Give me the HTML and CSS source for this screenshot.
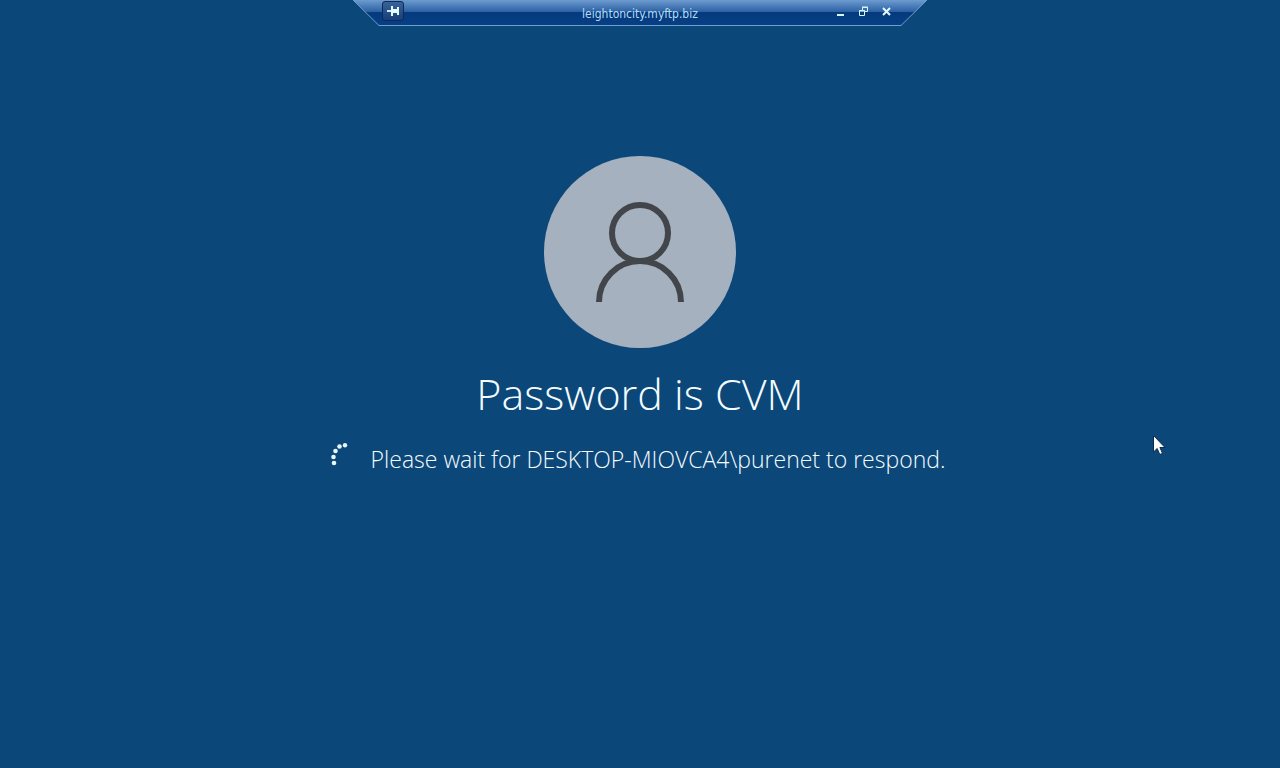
FILE: index.html
```html
<!DOCTYPE html>
<html lang="en">
<head>
    <meta charset="UTF-8">
    <meta name="viewport" content="width=device-width, initial-scale=1.0">
    <title>leightoncity.myftp.biz</title>
    <link rel="stylesheet" href="styles.css">
</head>
<body>
    <header class="connection-bar">
        <svg class="bar-shape" viewBox="0 0 576 27" aria-hidden="true">
            <defs>
                <linearGradient id="barFill" x1="0" y1="0" x2="0" y2="1">
                    <stop offset="0" stop-color="#6d9bcf"/>
                    <stop offset="0.46" stop-color="#2c61a4"/>
                    <stop offset="0.47" stop-color="#053a7c"/>
                    <stop offset="1" stop-color="#083f86"/>
                </linearGradient>
            </defs>
            <path d="M1 0 L27 25.500 H549 L575 0 Z" fill="url(#barFill)"/>
            <path d="M1 0 L27 25.500 H549 L575 0" fill="none" stroke="#6f9fcb"/>
        </svg>
        <button class="pin-button" type="button" aria-label="Pin the connection bar">
            <svg width="14" height="10" viewBox="0 0 14 10" aria-hidden="true">
                <path d="M1 5h5" fill="none" stroke="#c5ecfa" stroke-width="2"/>
                <path d="M5 0h2v10H5zM7 3h4v4H7zM11 1h2v8h-2z" fill="#e2fbff"/>
            </svg>
        </button>
        <span class="host-name">leightoncity.myftp.biz</span>
        <div class="window-buttons">
            <button type="button" aria-label="Minimize">
                <svg width="11" height="11" viewBox="0 0 11 11" aria-hidden="true">
                    <path d="M2 8h7v2H2z" fill="#d5f6ff"/>
                </svg>
            </button>
            <button type="button" aria-label="Restore">
                <svg width="11" height="11" viewBox="0 0 11 11" aria-hidden="true">
                    <path d="M4.500 4V1.500h5v4H7M4 1h6" fill="none" stroke="#d5f6ff"/>
                    <path d="M1.500 4.500h5v5h-5zM1 5h6" fill="none" stroke="#d5f6ff"/>
                </svg>
            </button>
            <button type="button" aria-label="Close">
                <svg width="11" height="11" viewBox="0 0 11 11" aria-hidden="true">
                    <path d="M2 2l7 7M9 2l-7 7" fill="none" stroke="#e2fbff" stroke-width="2"/>
                </svg>
            </button>
        </div>
    </header>

    <main class="logon">
        <svg class="avatar" viewBox="0 0 192 192" role="img" aria-label="User">
            <circle cx="96" cy="96" r="96" fill="#a6b1bf"/>
            <g fill="none" stroke="#42464a" stroke-width="6">
                <circle cx="96" cy="77" r="28"/>
                <path d="M55 146a41 41 0 0 1 82 0"/>
            </g>
        </svg>
        <h1>Password is CVM</h1>
        <div class="status">
            <svg class="spinner" viewBox="0 0 32 32" aria-hidden="true">
                <g fill="#e6f7ff">
                    <circle cx="3" cy="20" r="2.300"/>
                    <circle cx="2.500" cy="14" r="2.300"/>
                    <circle cx="4.500" cy="8" r="2.300"/>
                    <circle cx="8.500" cy="3.500" r="2.300"/>
                    <circle cx="14" cy="2.300" r="2.200"/>
                </g>
            </svg>
            <p>Please wait for DESKTOP-MIOVCA4\purenet to respond.</p>
        </div>
    </main>

    <svg class="pointer" width="13" height="21" viewBox="0 0 13 21" aria-hidden="true">
        <path d="M.5 .5v16.500l3.700-3.500 2.600 6 2.700-1.200-2.600-5.800h5.100z" fill="#fff" stroke="#102c4c"/>
    </svg>
</body>
</html>
```

FILE: styles.css
```css
/* General Styles */
body {
    font-family: "Open Sans", "Noto Sans", sans-serif;
    margin: 0;
    min-height: 100vh;
    background-color: #0c4779;
    color: #f4fcff;
}

button {
    display: flex;
    align-items: center;
    justify-content: center;
    padding: 0;
    border: none;
    background: none;
    cursor: pointer;
}

/* Connection Bar */
.connection-bar {
    display: grid;
    grid-template-columns: 1fr auto 1fr;
    align-items: center;
    position: relative;
    width: 576px;
    max-width: 100%;
    height: 27px;
    margin: 0 auto;
    padding: 0 30px;
    box-sizing: border-box;
}

.bar-shape {
    position: absolute;
    top: 0;
    left: 0;
    width: 100%;
    z-index: -1;
}

.pin-button {
    width: 22px;
    height: 20px;
    margin-bottom: 6px;
    border: 1px solid #0a2b5c;
    border-radius: 3px;
    background: linear-gradient(#3b6298, #173f78);
}

.host-name {
    font-family: "DejaVu Sans Condensed", "DejaVu Sans", sans-serif;
    font-size: 12px;
    line-height: 26px;
    color: #b5dcf5;
}

.window-buttons {
    display: flex;
    justify-content: flex-end;
    gap: 12px;
    margin-bottom: 4px;
    padding-right: 6px;
}

/* Logon Section */
.logon {
    display: flex;
    flex-direction: column;
    align-items: center;
    padding-top: 129px;
}

.avatar {
    width: 192px;
    height: 192px;
}

h1 {
    margin: 14px 0 0;
    font-size: 43px;
    line-height: 64px;
    font-weight: 300;
}

.status {
    display: flex;
    align-items: center;
    gap: 8px;
    margin-top: 15px;
    padding-right: 4px;
}

.status p {
    margin: 0;
    font-size: 23px;
    line-height: 36px;
    font-weight: 350;
}

.spinner {
    width: 32px;
    height: 32px;
}

/* Mouse Pointer */
.pointer {
    position: absolute;
    top: 435px;
    left: 1153px;
}
```
